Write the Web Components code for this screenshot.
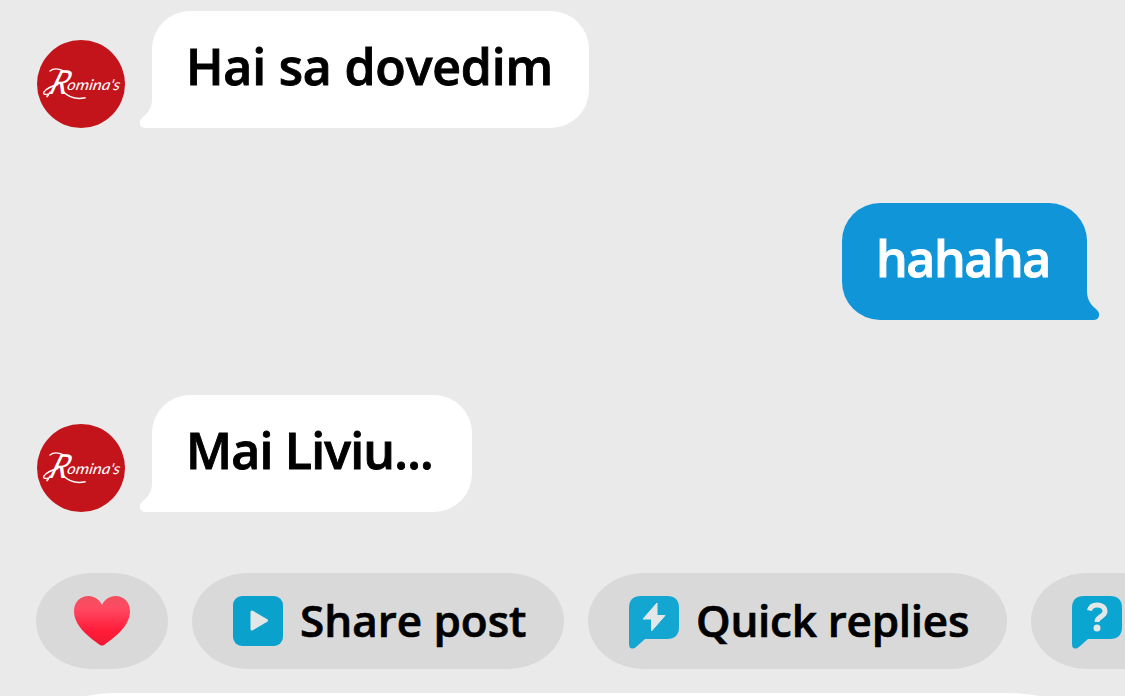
<!DOCTYPE html>
<html lang="en">
<head>
<meta charset="utf-8">
<title>Chat</title>
<style>
  body {
    margin: 0;
    background: #eaeaea;
    font-family: "Open Sans", "Noto Sans", sans-serif;
    overflow: hidden;
  }
</style>
</head>
<body>
<chat-screen>
  <chat-message avatar><chat-bubble style="--width: 437px; --spacing: -.2px">Hai sa dovedim</chat-bubble></chat-message>
  <chat-message class="own"><chat-bubble class="own" style="--width: 245px; --spacing: -1.4px">hahaha</chat-bubble></chat-message>
  <chat-message avatar><chat-bubble style="--width: 320px; --spacing: -.8px">Mai Liviu...</chat-bubble></chat-message>
  <action-chip slot="actions" icon="heart" style="--width: 132px"></action-chip>
  <action-chip slot="actions" icon="play" style="--width: 372px">Share post</action-chip>
  <action-chip slot="actions" icon="bolt" style="--width: 419px; --spacing: -.25px">Quick replies</action-chip>
  <action-chip slot="actions" icon="question" style="--width: 260px"></action-chip>
</chat-screen>

<script>
class ChatScreen extends HTMLElement {
  constructor() {
    super();

    this.attachShadow({mode: 'open'});
  }

  connectedCallback() {
    this.shadowRoot.innerHTML = `
    <style>
      :host {
        display: flex;
        flex-direction: column;
        box-sizing: border-box;
        width: 1125px;
        height: 696px;
        padding-top: 11px;
        overflow: hidden;
      }

      .messages {
        display: flex;
        flex-direction: column;
        flex: none;
        gap: 75px;
        height: 562px;
      }

      .actions {
        display: flex;
        flex: none;
        gap: 24px;
        height: 96px;
        padding-left: 36px;
      }

      .composer {
        flex: none;
        height: 120px;
        margin: 24px 36px 0;
        border-radius: 80px / 40px;
        background: #fff;
      }
    </style>
    <div class="messages"><slot></slot></div>
    <div class="actions"><slot name="actions"></slot></div>
    <div class="composer"></div>
    `;
  }
}

class ChatMessage extends HTMLElement {
  constructor() {
    super();

    this.attachShadow({mode: 'open'});
  }

  connectedCallback() {
    this.shadowRoot.innerHTML = `
    <style>
      :host {
        display: flex;
        align-items: flex-end;
        flex: none;
        gap: 27px;
        height: 117px;
        padding: 0 38px 0 37px;
      }

      :host(.own) {
        justify-content: flex-end;
      }
    </style>
    ${this.hasAttribute('avatar') ? '<user-avatar></user-avatar>' : ''}
    <slot></slot>
    `;
  }
}

class UserAvatar extends HTMLElement {
  constructor() {
    super();

    this.attachShadow({mode: 'open'});
  }

  connectedCallback() {
    this.shadowRoot.innerHTML = `
    <style>
      :host {
        display: block;
        flex: none;
        width: 88px;
        height: 88px;
      }

      svg {
        display: block;
      }

      text {
        font-family: Lato, sans-serif;
        font-style: italic;
        font-weight: 400;
      }
    </style>
    <svg width="88" height="88" viewBox="0 0 88 88">
      <circle cx="44" cy="44" r="44" fill="#c3141b"/>
      <g fill="#fff">
        <text transform="translate(11 53.500) skewX(-20)" font-size="33" font-weight="300" textLength="18" lengthAdjust="spacingAndGlyphs">R</text>
        <text transform="translate(29.500 50) skewX(-10)" font-size="15" textLength="53" lengthAdjust="spacingAndGlyphs">omina's</text>
      </g>
      <g fill="none" stroke="#fff" stroke-linecap="round">
        <path d="M13 31C16 28.500 21 28.500 26 30.500" stroke-width="1.300"/>
        <path d="M13 52C10 58 9 58 11 54C8 55 5.500 54 7 52C9 49 15 46 21 44.500" stroke-width="1.300"/>
        <path d="M26 51.500C31 56.500 38 60 48 57.800" stroke-width="1.600"/>
      </g>
    </svg>
    `;
  }
}

class ChatBubble extends HTMLElement {
  constructor() {
    super();

    this.attachShadow({mode: 'open'});
  }

  connectedCallback() {
    this.shadowRoot.innerHTML = `
    <style>
      :host {
        --bg: #fff;

        display: block;
        position: relative;
        box-sizing: border-box;
        flex: none;
        width: var(--width);
        height: 117px;
        padding: 25px 0 0 34px;
        border-radius: 38px 38px 38px 0;
        background: var(--bg);
        color: #000;
        font-size: 50px;
        font-weight: 600;
        line-height: 60px;
        letter-spacing: var(--spacing, 0);
        white-space: nowrap;
        -webkit-text-stroke: .9px currentColor;
      }

      :host(.own) {
        --bg: #1195d9;

        border-radius: 38px 38px 0 38px;
        color: #fff;
      }

      svg {
        position: absolute;
        bottom: 0;
        left: -13px;
        fill: var(--bg);
      }

      :host(.own) svg {
        right: -13px;
        left: auto;
        transform: scaleX(-1);
      }
    </style>
    <slot></slot>
    <svg width="14" height="32" viewBox="0 0 14 32"><path d="M14 0H13V3C13 12 9 17 3 22C-1 26 1 32 6 32H14Z"/></svg>
    `;
  }
}

const icons = {
  heart: `
    <svg width="58" height="52" viewBox="0 0 58 52">
      <defs>
        <linearGradient id="shade" x1="0" y1="0" x2="0" y2="1">
          <stop offset="0" stop-color="#f2505f"/>
          <stop offset=".25" stop-color="#ff4a62"/>
          <stop offset=".7" stop-color="#ff1c39"/>
          <stop offset="1" stop-color="#f01832"/>
        </linearGradient>
      </defs>
      <path fill="url(#shade)" d="M29 10C26.500 4.500 21.500 1 15.500 1C7 1 1 7.500 1 16C1 31 16 42 27 50Q29 51.200 31 50C42 42 57 31 57 16C57 7.500 51 1 42.500 1C36.500 1 31.500 4.500 29 10Z"/>
    </svg>`,
  play: `
    <svg width="50" height="54" viewBox="0 0 50 54">
      <rect y="2" width="50" height="50" rx="9" fill="#0aa2cd"/>
      <path d="M19 18V35L33.500 26.500Z" fill="#e4e7e8" stroke="#e4e7e8" stroke-width="3" stroke-linejoin="round"/>
    </svg>`,
  bolt: `
    <svg width="50" height="54" viewBox="0 0 50 54">
      <path d="M12 2H38Q50 2 50 14V33Q50 45 38 45H16L7 53Q4 55.500 1.500 54Q0 53 0 50V14Q0 2 12 2Z" fill="#12a6d1"/>
      <path d="M28 9L14 25H22.500V37L36 21.500H28Z" fill="#e4e7e8" stroke="#e4e7e8" stroke-linejoin="round"/>
    </svg>`,
  question: `
    <svg width="50" height="54" viewBox="0 0 50 54">
      <path d="M12 2H38Q50 2 50 14V33Q50 45 38 45H16L7 53Q4 55.500 1.500 54Q0 53 0 50V14Q0 2 12 2Z" fill="#0ba5d1"/>
      <path d="M17.500 16.500C18.500 12.500 21 11 25 11C30 11 33 13.500 33 17.500C33 23 25 22 25 28" fill="none" stroke="#e4e7e8" stroke-width="5"/>
      <circle cx="25" cy="34" r="3.500" fill="#e4e7e8"/>
    </svg>`
};

class ActionChip extends HTMLElement {
  constructor() {
    super();

    this.attachShadow({mode: 'open'});
  }

  connectedCallback() {
    const icon = this.getAttribute('icon');

    this.shadowRoot.innerHTML = `
    <style>
      :host {
        display: flex;
        align-items: center;
        box-sizing: border-box;
        flex: none;
        gap: 17px;
        width: var(--width);
        height: 96px;
        padding-left: ${icon === 'heart' ? 37 : 41}px;
        border-radius: 56px / 48px;
        background: #d9d9d9;
        color: #000;
        font-size: 44px;
        font-weight: 600;
        letter-spacing: var(--spacing, 0);
        line-height: 56px;
        white-space: nowrap;
        -webkit-text-stroke: .7px currentColor;
      }

      svg {
        display: block;
        flex: none;
        overflow: visible;
      }

      span {
        padding-bottom: 3px;
      }
    </style>
    ${icons[icon]}
    <span><slot></slot></span>
    `;
  }
}

customElements.define('chat-screen', ChatScreen);
customElements.define('chat-message', ChatMessage);
customElements.define('user-avatar', UserAvatar);
customElements.define('chat-bubble', ChatBubble);
customElements.define('action-chip', ActionChip);
</script>
</body>
</html>
